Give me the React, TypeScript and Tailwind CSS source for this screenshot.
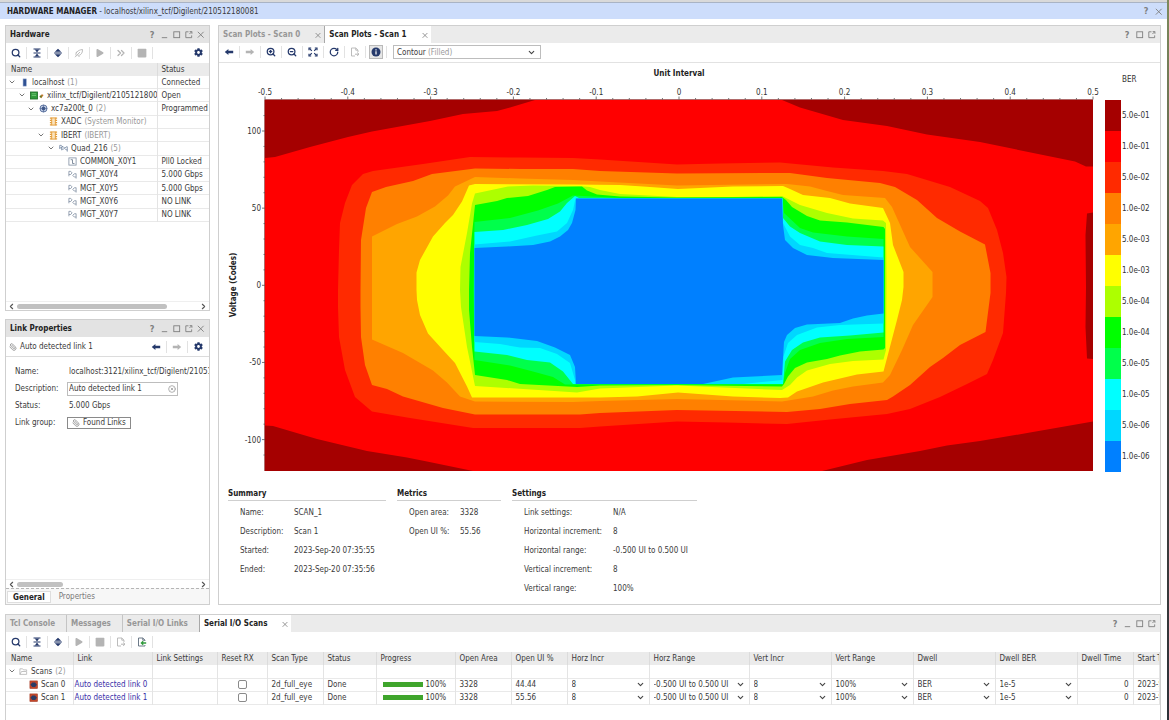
import { ReactNode } from "react";
import { ChevronDown, ChevronLeft, ChevronRight, ChevronsRight, CircleX, Paperclip, RotateCw, Search, ZoomIn, ZoomOut } from "lucide-react";
import { FaCog, FaPlay, FaStop } from "react-icons/fa";

const NAVY = "text-[#25396b]";
const MUTED = "text-[#b4b4b4]";

/* ---------- icons ---------- */

const Icon = ({ children, className = "size-[10px]" }: { children: ReactNode; className?: string }) => (
  <svg viewBox="0 0 10 10" className={className} fill="none" stroke="currentColor" aria-hidden="true">
    {children}
  </svg>
);

const ArrowLeftIcon = () => (
  <Icon><path d="M0.8 5 4.4 1.9V3.8H9.2V6.2H4.4V8.1Z" fill="currentColor" stroke="none" /></Icon>
);

const ArrowRightIcon = () => (
  <Icon><path d="M9.2 5 5.6 1.9V3.8H0.8V6.2H5.6V8.1Z" fill="currentColor" stroke="none" /></Icon>
);

const CollapseIcon = () => (
  <Icon>
    <path d="M1.5 1H8.5M1.5 5H8.5M1.5 9H8.5" strokeWidth="1.1" />
    <path d="M2.8 1.5H7.2L5 4.5ZM2.8 8.5H7.2L5 5.5Z" fill="currentColor" stroke="none" />
  </Icon>
);

const ExpandIcon = () => (
  <Icon>
    <path d="M1.2 5H8.8" strokeWidth="1.1" />
    <path d="M1.8 3.8H8.2L5 0.7ZM1.8 6.2H8.2L5 9.3Z" fill="currentColor" stroke="none" />
  </Icon>
);

const ProgramIcon = () => (
  <Icon>
    <path d="M2 7.5C1.5 5 3.5 2 8.5 1.5C8.7 5.5 6 8 3.5 7.2M1 9.2L6 4M3 3.5L1.8 5.2M5.5 8L4.5 9" strokeWidth="0.9" />
  </Icon>
);

const FitIcon = () => (
  <Icon>
    <path d="M1 3.2V1H3.2M6.8 1H9V3.2M9 6.8V9H6.8M3.2 9H1V6.8" strokeWidth="1.2" />
    <path d="M1.5 1.5 3.8 3.8M8.5 1.5 6.2 3.8M1.5 8.5 3.8 6.2M8.5 8.5 6.2 6.2" strokeWidth="1.1" />
  </Icon>
);

const ExportIcon = () => (
  <Icon>
    <path d="M8 5V3.2L5.8 1H1.5V9H5M5.8 1V3.2H8" strokeWidth="0.9" />
    <path d="M5 7.2H8.5M7.2 5.6 9 7.2 7.2 8.8" strokeWidth="1" />
  </Icon>
);

const ImportIcon = () => (
  <Icon>
    <path d="M8 4V3.2L5.8 1H1.5V9H8V8.2M5.8 1V3.2H8" strokeWidth="0.9" stroke="#5c6b7c" />
    <path d="M4.5 6H9.2M6.2 4.3 4.4 6 6.2 7.7" strokeWidth="1.3" stroke="#2f9a3b" />
  </Icon>
);

const InfoIcon = () => (
  <Icon>
    <circle cx="5" cy="5" r="4.5" fill="currentColor" stroke="none" />
    <path d="M5 4.3V7.6M5 2.3V3.4" stroke="#fff" strokeWidth="1.2" />
  </Icon>
);

const ServerIcon = () => (
  <Icon className="size-[9px]"><rect x="3.4" y="1" width="3.6" height="8" fill="#2f5193" stroke="#93a6cc" strokeWidth="0.6" /></Icon>
);

const BoardIcon = () => (
  <svg viewBox="0 0 16 10" className="w-[14px] h-[9px]" aria-hidden="true">
    <rect x="0.5" y="1" width="8" height="8" fill="#2f9a3b" stroke="#1f6f2a" />
    <path d="M2 3H7M2 5H7" stroke="#7ed087" strokeWidth="0.8" />
    <path d="M11 6.5 13.5 3.5 15.5 4.5 13 8Z" fill="#c0782d" />
    <circle cx="12.2" cy="6.2" r="1.2" fill="#5b7d2f" />
  </svg>
);

const DeviceIcon = () => (
  <Icon className="size-[9px]">
    <circle cx="5" cy="5" r="3.9" stroke="#4a6394" strokeWidth="1" fill="#dbe4f5" />
    <rect x="3.4" y="3.4" width="3.2" height="3.2" fill="#3d5688" stroke="#3d5688" strokeWidth="0.6" />
    <path d="M5 1V3.5M5 6.5V9M1 5H3.5M6.5 5H9" stroke="#3d5688" strokeWidth="0.7" />
  </Icon>
);

const CoreIcon = () => (
  <Icon className="size-[9px]">
    <rect x="3" y="1" width="4" height="8" fill="#fbe3bd" stroke="#e39a35" />
    <path d="M1 1.2H3M1 3.8H3M1 6.2H3M1 8.8H3M7 1.2H9M7 3.8H9M7 6.2H9M7 8.8H9" stroke="#e39a35" strokeWidth="1.3" />
  </Icon>
);

const QuadIcon = () => (
  <Icon className="size-[9px]">
    <path d="M0.8 5.5V1.5H2.5L4 3L2.5 4.3H0.8M3 7V3H4.7L6.2 4.5L4.7 5.8H3M9.2 3V8.5M9.2 3.2H7.8L6.3 4.8L7.8 6.5H9.2" stroke="#7488a3" strokeWidth="0.9" />
  </Icon>
);

const CommonIcon = () => (
  <Icon className="size-[9px]">
    <rect x="1" y="1" width="8" height="8" stroke="#8190a3" strokeWidth="0.9" />
    <path d="M3 3H5V7.2H7.2" stroke="#66758a" strokeWidth="0.9" />
  </Icon>
);

const MgtIcon = () => (
  <Icon className="size-[9px]">
    <path d="M1 7V1.5H3L4.5 3.2L3 5H1M9 4V9.5M9 4.2H7L5.3 6L7 7.8H9" stroke="#8190a3" strokeWidth="0.9" />
  </Icon>
);

const FolderIcon = () => (
  <Icon className="size-[9px]"><path d="M1 8.2V2H4L5 3.2H8.5V4.5M1 8.2H8.5V5H2.8L1 8.2" stroke="#b5b5b5" strokeWidth="0.9" /></Icon>
);

const EyeScanIcon = () => (
  <Icon className="size-[9px]">
    <rect x="1" y="1" width="8.5" height="8.5" fill="#c2472b" stroke="#a33a22" strokeWidth="0.6" />
    <path d="M1.6 5.2 3.6 2.8H6.8L8.8 5.2 6.8 7.8H3.6Z" fill="#2b3c66" stroke="none" />
  </Icon>
);

/* ---------- small building blocks ---------- */

type Control = "help" | "min" | "max" | "float" | "close";

const controlIcons: Record<Exclude<Control, "help">, ReactNode> = {
  min: <path d="M2 8.5H8" />,
  max: <rect x="2" y="2" width="6.5" height="6.5" />,
  float: <path d="M5 2H2V8.5H8.5V6M6 4.5 8.5 2M6.3 1.8H8.8V4.2" />,
  close: <path d="M2 2 8.5 8.5M8.5 2 2 8.5" />,
};

const WindowControls = ({ items }: { items: Control[] }) => (
  <div className="flex items-center ml-auto pr-[3px] text-[#7f7f7f]">
    {items.map((item) => (
      <button key={item} type="button" aria-label={item} className="flex items-center justify-center w-3 h-3">
        {item === "help" ? (
          <span className="font-bold text-[9px] leading-3">?</span>
        ) : (
          <Icon className="size-[9px]">{controlIcons[item]}</Icon>
        )}
      </button>
    ))}
  </div>
);

const ToolButton = ({ label, disabled, active, line = true, children }: { label: string; disabled?: boolean; active?: boolean; line?: boolean; children: ReactNode }) => (
  <div className={`flex items-center justify-center w-[21px] h-3 ${line ? "border-r border-[#e2e2e2]" : ""}`}>
    <button
      type="button"
      aria-label={label}
      disabled={disabled}
      className={`flex items-center justify-center size-[14px] shrink-0 ${disabled ? MUTED : NAVY} ${active ? "bg-[#e6e6e6] border border-[#b9b9b9]" : ""}`}
    >
      {children}
    </button>
  </div>
);

const Tab = ({ label, active, closable }: { label: string; active?: boolean; closable?: boolean }) => (
  <div className={`flex items-center h-full pl-1 font-bold ${active ? "bg-white text-[#222] border-l border-[#a8a8a8] -ml-px" : "text-[#979797] border-r border-[#c4c4c4]"}`}>
    <button type="button" className={closable ? "pr-[14px]" : "pr-[11px]"}>{label}</button>
    {closable && (
      <button type="button" aria-label={`Close ${label}`} className="flex items-center text-[#7f7f7f] pr-0.5">
        <Icon className="size-[8px]"><path d="M2 2.5 8 8.5M8 2.5 2 8.5" /></Icon>
      </button>
    )}
  </div>
);

const HScroll = ({ thumb }: { thumb: string }) => (
  <div className="flex items-center h-[9px] px-px border-t border-[#efefef] text-[#555]">
    <ChevronLeft className="size-[9px]" strokeWidth={3} />
    <div className="flex-1">
      <div className={`h-[5px] ml-px rounded-full bg-[#c1c1c1] ${thumb}`}></div>
    </div>
    <ChevronRight className="size-[9px]" strokeWidth={3} />
  </div>
);

const DropDown = ({ label, value }: { label: string; value: string }) => (
  <div className="relative">
    <select aria-label={label} defaultValue={value} className="block w-full appearance-none bg-transparent outline-none truncate">
      <option>{value}</option>
    </select>
    <ChevronDown className="absolute right-1 top-px size-[9px] text-[#444] pointer-events-none" strokeWidth={3} />
  </div>
);

/* ---------- hardware tree ---------- */

type Node = { name: string; note?: string; indent: string; open?: boolean; icon: ReactNode; status: string };

const hardware: Node[] = [
  { name: "localhost", note: "(1)", indent: "pl-[2px]", open: true, icon: <ServerIcon />, status: "Connected" },
  { name: "xilinx_tcf/Digilent/210512180081", indent: "pl-[12px]", open: true, icon: <BoardIcon />, status: "Open" },
  { name: "xc7a200t_0", note: "(2)", indent: "pl-[21px]", open: true, icon: <DeviceIcon />, status: "Programmed" },
  { name: "XADC", note: "(System Monitor)", indent: "pl-[31px]", icon: <CoreIcon />, status: "" },
  { name: "IBERT", note: "(IBERT)", indent: "pl-[31px]", open: true, icon: <CoreIcon />, status: "" },
  { name: "Quad_216", note: "(5)", indent: "pl-[41px]", open: true, icon: <QuadIcon />, status: "" },
  { name: "COMMON_X0Y1", indent: "pl-[50px]", icon: <CommonIcon />, status: "Pll0 Locked" },
  { name: "MGT_X0Y4", indent: "pl-[50px]", icon: <MgtIcon />, status: "5.000 Gbps" },
  { name: "MGT_X0Y5", indent: "pl-[50px]", icon: <MgtIcon />, status: "5.000 Gbps" },
  { name: "MGT_X0Y6", indent: "pl-[50px]", icon: <MgtIcon />, status: "NO LINK" },
  { name: "MGT_X0Y7", indent: "pl-[50px]", icon: <MgtIcon />, status: "NO LINK" },
];

const HardwarePanel = () => (
  <section className="flex flex-col flex-1 min-h-0 bg-white border border-[#cfcfcf]">
    <div className="flex items-center h-[17px] shrink-0 pl-1 bg-[#e3e3e3]">
      <h2 className="font-bold text-[#222]">Hardware</h2>
      <WindowControls items={["help", "min", "max", "float", "close"]} />
    </div>
    <div className="flex items-center h-5 pb-px shrink-0">
      <ToolButton label="Search"><Search className="size-[10px]" strokeWidth={3} /></ToolButton>
      <ToolButton label="Collapse all"><CollapseIcon /></ToolButton>
      <ToolButton label="Expand all"><ExpandIcon /></ToolButton>
      <ToolButton label="Auto connect" disabled><ProgramIcon /></ToolButton>
      <ToolButton label="Run trigger" disabled><FaPlay className="size-[8px]" /></ToolButton>
      <ToolButton label="Run immediate" disabled><ChevronsRight className="size-[12px]" strokeWidth={2.6} /></ToolButton>
      <ToolButton label="Stop" disabled><FaStop className="size-[10px]" /></ToolButton>
      <div className="ml-auto"><ToolButton label="Settings" line={false}><FaCog className="size-[9px]" /></ToolButton></div>
    </div>
    <table className="w-full table-fixed border-collapse h-[159px]">
      <colgroup>
        <col className="w-[151px]" />
        <col />
      </colgroup>
      <thead>
        <tr className="h-[13px] bg-[#ebebeb]">
          <th className="p-0 pl-[5px] font-normal text-left border-r border-[#dcdcdc]">Name</th>
          <th className="p-0 pl-1 font-normal text-left">Status</th>
        </tr>
      </thead>
      <tbody>
        {hardware.map((node) => (
          <tr key={node.name} className="border-b border-[#e9e9e9]">
            <td className="p-0 border-r border-[#e4e4e4] overflow-hidden">
              <div className={`flex items-center whitespace-nowrap ${node.indent}`}>
                <span className="w-[9px] shrink-0">
                  {node.open && <ChevronDown className="size-[8px] text-[#777]" strokeWidth={3} />}
                </span>
                <span className="mx-[3px] shrink-0">{node.icon}</span>
                <span>{node.name}</span>
                {node.note && <span className="ml-[3px] text-[#999]">{node.note}</span>}
              </div>
            </td>
            <td className="p-0 pl-1 whitespace-nowrap overflow-hidden">{node.status}</td>
          </tr>
        ))}
      </tbody>
    </table>
    <div className="mt-auto"><HScroll thumb="w-[82%]" /></div>
  </section>
);

/* ---------- link properties ---------- */

const LinkPropertiesPanel = () => (
  <section className="flex flex-col flex-1 min-h-0 bg-white border border-[#cfcfcf]">
    <div className="flex items-center h-[17px] shrink-0 pl-1 bg-[#e3e3e3]">
      <h2 className="font-bold text-[#222]">Link Properties</h2>
      <WindowControls items={["help", "min", "max", "float", "close"]} />
    </div>
    <div className="flex items-center h-5 shrink-0 pl-[3px] border-b border-[#dcdcdc]">
      <Paperclip className="size-[8px] mr-[3px] text-[#8e8e8e] -scale-x-100" strokeWidth={2.4} />
      <span>Auto detected link 1</span>
      <div className="flex ml-auto">
        <ToolButton label="Previous object"><ArrowLeftIcon /></ToolButton>
        <ToolButton label="Next object" disabled><ArrowRightIcon /></ToolButton>
        <ToolButton label="Settings" line={false}><FaCog className="size-[9px]" /></ToolButton>
      </div>
    </div>
    <div className="grid grid-cols-[52px_1fr] items-center pl-[9px] pt-[6px] auto-rows-[17px] overflow-hidden whitespace-nowrap">
      <span>Name:</span>
      <span className="pl-[2px]">localhost:3121/xilinx_tcf/Digilent/210512180081</span>
      <label htmlFor="description">Description:</label>
      <div className="flex items-center w-[111px] h-[14px] pl-px pr-px border border-[#bdbdbd]">
        <input id="description" type="text" defaultValue="Auto detected link 1" className="flex-1 min-w-0 outline-none" />
        <button type="button" aria-label="Clear description"><CircleX className="size-[8px] text-[#a5a5a5]" strokeWidth={2.6} /></button>
      </div>
      <span>Status:</span>
      <span className="pl-[2px]">5.000 Gbps</span>
      <span>Link group:</span>
      <button type="button" className="flex items-center justify-self-start h-3 px-1 border border-[#8a8a8a]">
        <Paperclip className="size-[8px] mr-[3px] text-[#8e8e8e] -scale-x-100" strokeWidth={2.4} />
        Found Links
      </button>
    </div>
    <div className="mt-auto">
      <HScroll thumb="w-[25%]" />
      <div className="flex items-center h-4 pl-px bg-[#f7f7f7] border-t border-dashed border-[#b5b5b5]">
        <button type="button" className="h-3 px-[5px] bg-white border border-[#dedede] font-bold text-[#222]">General</button>
        <button type="button" className="ml-2 text-[#777]">Properties</button>
      </div>
    </div>
  </section>
);

/* ---------- eye scan plot ---------- */

const levels = [
  { label: "5.0e-01", color: "#a50000" },
  { label: "1.0e-01", color: "#ff0000" },
  { label: "5.0e-02", color: "#ff2a00" },
  { label: "1.0e-02", color: "#ff8000" },
  { label: "5.0e-03", color: "#ffa500" },
  { label: "1.0e-03", color: "#ffff00" },
  { label: "5.0e-04", color: "#adff00" },
  { label: "1.0e-04", color: "#00ff00" },
  { label: "5.0e-05", color: "#00ff4b" },
  { label: "1.0e-05", color: "#00ffff" },
  { label: "5.0e-06", color: "#00d7ff" },
  { label: "1.0e-06", color: "#0080ff" },
];

// closed areas, painted from the outside in
const contours = [
  { color: "#a50000", points: "265,100 265,158 275,157 310,147 348,137 372,131.5 430,121 463,114 497,111 510,107.5 535,100" },
  { color: "#a50000", points: "265,471 265,425.5 273,426 317,439 367,451 407,457.5 427,461.5 473,471" },
  { color: "#a50000", points: "782,100 800,107.5 843,120 887,126 927,134.5 980,142 1075,161.5 1086,166.5 1093,166.5 1093,100" },
  { color: "#a50000", points: "822,471 867,460 920,451 947,445.5 980,441 1030,432.5 1093,421.5 1093,471" },
  { color: "#a50000", points: "1093,212.5 1087,213.5 1085.5,235 1086,287 1085.5,327 1087,358.5 1093,359" },
  { color: "#ff2a00", points: "338,290 339,250 340,223 345,203 352,185 363,174 373,171 423,164 470,157 520,157.5 573,158 600,159.5 677,164.5 720,163.5 780,162.5 833,167.5 883,171 907,174 950,187 980,201 988,208 997,230 1003,253 1006.5,277 1006,293 1003,333 993,360 987,374 967,384 940,397 910,409 887,414 830,419.5 787,424 727,422.5 677,421.5 600,426.5 580,428 473,428 407,417.5 372,411.5 355,397 345,370 339,337 338,307" },
  { color: "#ff8000", points: "360.5,290 361,240 366,208 372,192 386,187 413,181 432,174 475,168.5 520,169 573,169 600,171 677,173.5 790,173 827,178 880,183 895,187 917,200 937,218 960,231.5 985,244.5 990.5,273 990.5,293 985.5,332 960,345 943,358 930,367 910,385 893,396.5 887,400 850,404 820,409 787,412 677,410 600,413 580,414.5 475,414.5 443,408 403,396.5 387,389 372,385 365,365 361,337 360.5,307" },
  { color: "#ffa500", points: "372,290 372,236.5 397,224 417,216.5 435,206.5 448,195.5 455,186.5 475,177 520,178.5 573,180 600,181.5 677,185.5 787,184 810,186.5 827,191 843,195 885,198 892,207 910,247 932.5,272 932.5,297 913,325 902,350 890,375 883,382.5 853,386.5 833,390.5 813,396.5 782,401.5 677,399 600,401 573,402 475,401.5 460,396.5 447,382.5 433,370.5 403,353 372,339.5" },
  { color: "#ffff00", points: "416.5,290 416.5,272.5 420,260 433,236.5 445,223 453,215 462,201.5 469,185.5 475,184 573,184.5 620,185 643,186.5 678,189 733,186.5 783,186 790,189 803,195 830,198 850,203.5 883,208 890,223 893,245 903.5,272 903.5,287 902,300 897,320 883.5,371.5 857,374.5 823,382.5 797,391.5 788,397.5 780,398 733,396.5 678,392.5 637,396.5 600,397.5 472,397.5 467,386.5 455,363 443,350 428,333.5 420,315 417,300" },
  { color: "#adff00", points: "460,290 460.5,267 467,233 472,203.5 475,193.5 508,186.5 533,185.5 578,186 590,187 600,190 620,194 677,197 733,197 782,196 790,200 800,205 827,213 853,218.5 883,220.5 886,223 886.5,280 886,350 883.5,359.5 853,361 830,364 807,370.5 797,377.5 790,385 782,390 677,385.5 600,388.5 577,392.5 475,386 467,347 461,307" },
  { color: "#00ff00", points: "469,290 470,253 475,205 497,201 507,198 528,196 547,190 555,187 582,186.5 587,190.5 597,194.5 620,196.5 677,197.5 782,197 786,200 792,207 807,216 820,220.5 847,222.5 883.5,227 885,229 885,348 883.5,349.5 860,351.5 840,355.5 827,359 807,362.5 795,368 788,376.5 784,384 782,386.5 677,385 600,385.5 577,387 520,384 507,380 475,375 472,347 469,310" },
  { color: "#00ff4b", points: "473.5,290 474.5,222 510,218 538,210.5 558,203.5 573,195.5 620,198 782.5,198 784,213 800,228 813,232.5 847,236.5 883.5,239 883.5,337 847,339 820,343 800,350 790,359 785,373 783,384.5 565,384.5 553,377 533,371.5 510,365.5 474.5,360" },
  { color: "#00ffff", points: "474.5,232 503,230 527,225 548,219 560,211.5 567,203 575,196 579,198 782.5,198.5 783,218 790,226.5 800,233 820,241.5 847,245 883.5,246.5 883.5,332.5 850,335.5 820,337.5 803,342.5 792,350 785,361.5 783,384 573,384 563,371.5 550,362.5 527,360 507,355 474.5,351.5" },
  { color: "#00d7ff", points: "474.5,244.5 510,241.5 537,235.5 557,231.5 567,223 573,210 575.5,198.5 782.5,198.5 783,223 790,236.5 800,245 813,248 827,253 883.5,257.5 883.5,323.5 840,325 817,327.5 797,335 788,343 783.5,356.5 782.5,380 743,384 575,384 575,380 570,363 557,354 540,348 520,347.5 500,344 474.5,342" },
  { color: "#0080ff", points: "474.5,248 507,246.5 533,245 550,241.5 560,236.5 568,230 572,223 575.5,210 576,198.5 782,198.5 783,225 785,240 793,248 807,255 833,258 883.5,260 883.5,313.5 867,315.5 853,318.5 840,323 807,324.5 795,328 787,335 784,342 782,375 733,377.5 703,384 576,384 575,367 570,355 555,347.5 537,341 507,337.5 474.5,336" },
];

const xTicks = Array.from({ length: 51 }, (_, i) => i);
const yTicks = Array.from({ length: 23 }, (_, i) => 110 - i * 10);

const EyePlot = () => (
  <svg viewBox="219 63 941 418" className="block w-full" role="img" aria-label="Eye scan contour, BER over unit interval and voltage" fontSize="8" fill="#333">
    <text x="679" y="76" textAnchor="middle" fontWeight="bold" fill="#222">Unit Interval</text>
    <text transform="translate(236 285) rotate(-90)" textAnchor="middle" fontWeight="bold" fill="#222">Voltage (Codes)</text>

    <rect x="265" y="100" width="828" height="371" fill="#ff0000" />
    {contours.map((area, i) => (
      <polygon key={i} points={area.points} fill={area.color} />
    ))}

    <path d="M265 99.5H1093M264.5 99.5V471" stroke="#b06a6a" strokeWidth="1" />
    {xTicks.map((i) => (
      <g key={i}>
        <path d={`M${265 + i * 16.56} ${i % 5 ? 98 : 96.5}V99.5`} stroke="#555" strokeWidth="0.8" />
        {i % 5 === 0 && (
          <text x={265 + i * 16.56} y="95" textAnchor="middle">{i === 25 ? "0" : (i / 50 - 0.5).toFixed(1)}</text>
        )}
      </g>
    ))}
    {yTicks.map((code) => (
      <g key={code}>
        <path d={`M${code % 50 ? 263.5 : 262} ${285.3 - code * 1.543}H265`} stroke="#555" strokeWidth="0.8" />
        {code % 50 === 0 && (
          <text x="261" y={288.3 - code * 1.543} textAnchor="end">{code}</text>
        )}
      </g>
    ))}

    <text x="1122" y="82">BER</text>
    {levels.map((level, i) => (
      <g key={level.label}>
        <rect x="1105" y={100 + i * 31} width="16" height="31" fill={level.color} />
        <text x="1122" y={118 + i * 31}>{level.label}</text>
      </g>
    ))}
  </svg>
);

const details = [
  {
    title: "Summary", width: "w-[158px]", cols: "grid-cols-[54px_1fr]",
    rows: [["Name:", "SCAN_1"], ["Description:", "Scan 1"], ["Started:", "2023-Sep-20 07:35:55"], ["Ended:", "2023-Sep-20 07:35:56"]],
  },
  {
    title: "Metrics", width: "w-[104px]", cols: "grid-cols-[51px_1fr]",
    rows: [["Open area:", "3328"], ["Open UI %:", "55.56"]],
  },
  {
    title: "Settings", width: "w-[185px]", cols: "grid-cols-[89px_1fr]",
    rows: [["Link settings:", "N/A"], ["Horizontal increment:", "8"], ["Horizontal range:", "-0.500 UI to 0.500 UI"], ["Vertical increment:", "8"], ["Vertical range:", "100%"]],
  },
];

const ScanPlotsPanel = () => (
  <section className="flex flex-col flex-1 min-w-0 bg-white border border-[#cfcfcf]">
    <div className="flex items-center h-[17px] shrink-0 bg-[#ebebeb]">
      <Tab label="Scan Plots - Scan 0" closable />
      <Tab label="Scan Plots - Scan 1" active closable />
      <WindowControls items={["help", "max", "float"]} />
    </div>
    <div className="flex items-center h-5 pb-px shrink-0 border-b border-[#e2e2e2]">
      <ToolButton label="Previous"><ArrowLeftIcon /></ToolButton>
      <ToolButton label="Next" disabled><ArrowRightIcon /></ToolButton>
      <ToolButton label="Zoom in"><ZoomIn className="size-[10px]" strokeWidth={3} /></ToolButton>
      <ToolButton label="Zoom out"><ZoomOut className="size-[10px]" strokeWidth={3} /></ToolButton>
      <ToolButton label="Zoom fit"><FitIcon /></ToolButton>
      <ToolButton label="Refresh"><RotateCw className="size-[10px]" strokeWidth={3} /></ToolButton>
      <ToolButton label="Export" disabled><ExportIcon /></ToolButton>
      <ToolButton label="Show details" active><InfoIcon /></ToolButton>
      <div className="relative flex items-center w-[148px] h-[14px] ml-[6px] pl-[3px] border border-[#bdbdbd]">
        <select aria-label="Plot type" defaultValue="filled" className="w-full h-full appearance-none text-transparent outline-none">
          <option value="filled">Contour (Filled)</option>
        </select>
        <span className="absolute left-[3px] pointer-events-none">Contour <span className="text-[#999]">(Filled)</span></span>
        <ChevronDown className="absolute right-1 size-[9px] text-[#444] pointer-events-none" strokeWidth={3} />
      </div>
    </div>
    <EyePlot />
    <div className="flex items-start gap-[11px] pl-[9px] pt-[7px] pb-[6px]">
      {details.map((group) => (
        <div key={group.title} className={group.width}>
          <h3 className="font-bold text-[#222] leading-3 border-b border-[#cfcfcf] mb-[2px]">{group.title}</h3>
          <dl className={`grid ${group.cols} auto-rows-[19px] items-center pl-3 whitespace-nowrap`}>
            {group.rows.map(([name, value]) => [
              <dt key={name}>{name}</dt>,
              <dd key={name + value}>{value}</dd>,
            ])}
          </dl>
        </div>
      ))}
    </div>
  </section>
);

/* ---------- serial i/o scans ---------- */

const columns = [
  { title: "Name", width: "w-[67px]" },
  { title: "Link", width: "w-[79px]" },
  { title: "Link Settings", width: "w-[65px]" },
  { title: "Reset RX", width: "w-[50px]" },
  { title: "Scan Type", width: "w-[56px]" },
  { title: "Status", width: "w-[53px]" },
  { title: "Progress", width: "w-[79px]" },
  { title: "Open Area", width: "w-[56px]" },
  { title: "Open UI %", width: "w-[56px]" },
  { title: "Horz Incr", width: "w-[82px]" },
  { title: "Horz Range", width: "w-[100px]" },
  { title: "Vert Incr", width: "w-[82px]" },
  { title: "Vert Range", width: "w-[82px]" },
  { title: "Dwell", width: "w-[82px]" },
  { title: "Dwell BER", width: "w-[82px]" },
  { title: "Dwell Time", width: "w-[56px]" },
  { title: "Start Time", width: "" },
];

const scans = [
  { name: "Scan 0", link: "Auto detected link 0", openUi: "44.44", start: "2023-Sep-20 07:34:41" },
  { name: "Scan 1", link: "Auto detected link 1", openUi: "55.56", start: "2023-Sep-20 07:35:55" },
];

const Cell = ({ children, className = "pl-1" }: { children?: ReactNode; className?: string }) => (
  <td className={`p-0 border-r border-[#e4e4e4] overflow-hidden whitespace-nowrap ${className}`}>{children}</td>
);

const ScansPanel = () => (
  <section className="flex flex-col flex-1 bg-white border border-b-0 border-[#cfcfcf]">
    <div className="flex items-center h-[17px] shrink-0 bg-[#ebebeb]">
      <Tab label="Tcl Console" />
      <Tab label="Messages" />
      <Tab label="Serial I/O Links" />
      <Tab label="Serial I/O Scans" active closable />
      <WindowControls items={["help", "min", "max", "float"]} />
    </div>
    <div className="flex items-center h-5 pb-px shrink-0">
      <ToolButton label="Search"><Search className="size-[10px]" strokeWidth={3} /></ToolButton>
      <ToolButton label="Collapse all"><CollapseIcon /></ToolButton>
      <ToolButton label="Expand all"><ExpandIcon /></ToolButton>
      <ToolButton label="Run scan" disabled><FaPlay className="size-[8px]" /></ToolButton>
      <ToolButton label="Stop scan" disabled><FaStop className="size-[10px]" /></ToolButton>
      <ToolButton label="Write scan" disabled><ExportIcon /></ToolButton>
      <ToolButton label="Read scan"><ImportIcon /></ToolButton>
    </div>
    <table className="w-full table-fixed border-collapse">
      <colgroup>
        {columns.map((column) => <col key={column.title} className={column.width} />)}
      </colgroup>
      <thead>
        <tr className="h-[13px] bg-[#ebebeb]">
          {columns.map((column) => (
            <th key={column.title} className="p-0 pl-1 first:pl-[5px] font-normal text-left whitespace-nowrap overflow-hidden border-r border-[#dcdcdc]">{column.title}</th>
          ))}
        </tr>
      </thead>
      <tbody>
        <tr className="h-[13px] border-b border-[#e9e9e9]">
          <Cell className="pl-[2px]">
            <div className="flex items-center">
              <ChevronDown className="size-[8px] text-[#777]" strokeWidth={3} />
              <span className="mx-[3px]"><FolderIcon /></span>
              Scans<span className="ml-[3px] text-[#999]">(2)</span>
            </div>
          </Cell>
          {columns.slice(1).map((column) => <Cell key={column.title} />)}
        </tr>
        {scans.map((scan) => (
          <tr key={scan.name} className="h-[13px] border-b border-[#e9e9e9]">
            <Cell className="pl-[23px]">
              <div className="flex items-center gap-[3px]"><EyeScanIcon />{scan.name}</div>
            </Cell>
            <Cell className="pl-px"><a href="#" className="text-[#3a2fa8]">{scan.link}</a></Cell>
            <Cell />
            <Cell className="">
              <input type="checkbox" aria-label={`Reset RX for ${scan.name}`} className="block mx-auto appearance-none size-[9px] rounded-[2px] border border-[#8a8a8a] bg-white" />
            </Cell>
            <Cell>2d_full_eye</Cell>
            <Cell>Done</Cell>
            <Cell className="pl-[6px]">
              <div className="flex items-center gap-[3px]"><div className="w-[40px] h-[5px] bg-[#3fa52c]"></div>100%</div>
            </Cell>
            <Cell>3328</Cell>
            <Cell>{scan.openUi}</Cell>
            <Cell><DropDown label="Horz Incr" value="8" /></Cell>
            <Cell><DropDown label="Horz Range" value="-0.500 UI to 0.500 UI" /></Cell>
            <Cell><DropDown label="Vert Incr" value="8" /></Cell>
            <Cell><DropDown label="Vert Range" value="100%" /></Cell>
            <Cell><DropDown label="Dwell" value="BER" /></Cell>
            <Cell><DropDown label="Dwell BER" value="1e-5" /></Cell>
            <Cell className="pr-1 text-right">0</Cell>
            <Cell>{scan.start}</Cell>
          </tr>
        ))}
      </tbody>
    </table>
  </section>
);

export default function App() {
  return (
    <div className="flex min-h-screen bg-white text-[#3a3a3a] text-[8px] leading-[11px] font-['DejaVu_Sans_Condensed','DejaVu_Sans',sans-serif]">
      <div className="flex flex-col flex-1 min-w-0">
        <div className="h-[3px] bg-[#d9d9d9] border-b border-[#a9b3c4]"></div>
        <header className="flex items-center h-4 pl-[7px] bg-[#cdddfb]">
          <h1 className="whitespace-pre"><b className="text-[#222]">HARDWARE MANAGER</b> - localhost/xilinx_tcf/Digilent/210512180081</h1>
          <WindowControls items={["help", "close"]} />
        </header>
        <main className="flex flex-col flex-1 pt-[6px] pl-[5px] pr-[6px] gap-[9px]">
          <div className="flex gap-2">
            <aside className="flex flex-col w-[205px] shrink-0 gap-2">
              <HardwarePanel />
              <LinkPropertiesPanel />
            </aside>
            <ScanPlotsPanel />
          </div>
          <ScansPanel />
        </main>
      </div>
      <div className="w-[2px] shrink-0 bg-linear-to-b from-[#7d8a5c] via-[#4c4740] to-[#2d3138]"></div>
    </div>
  );
}
